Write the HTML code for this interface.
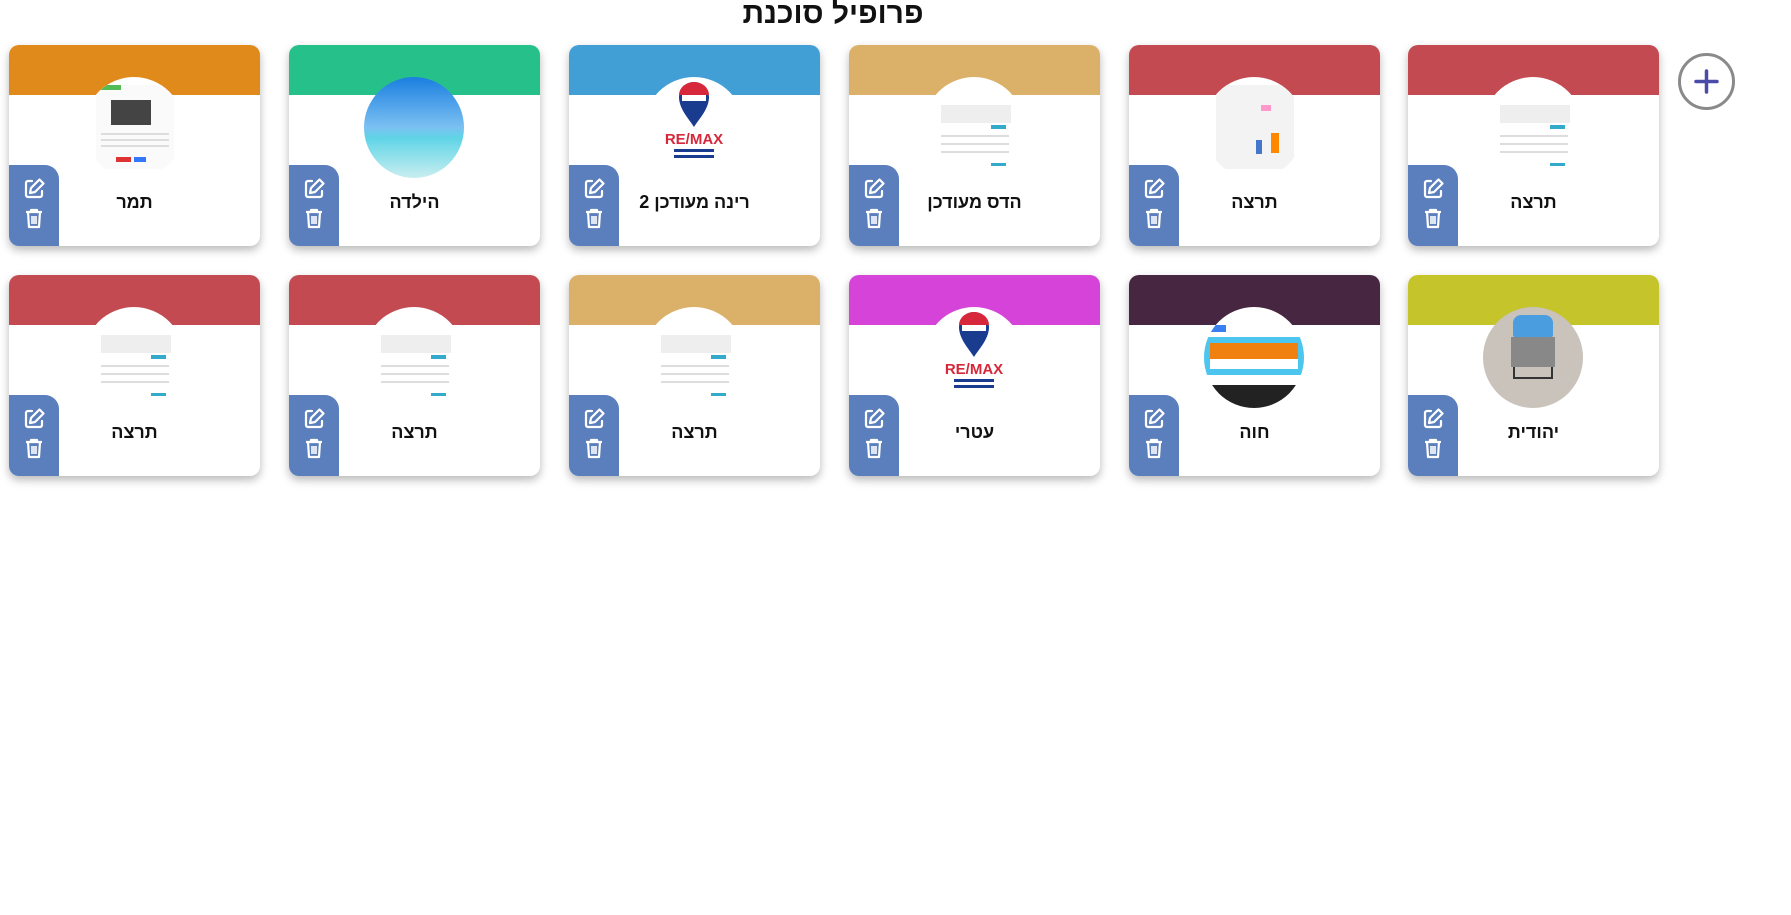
<!DOCTYPE html>
<html><head><meta charset="utf-8"><style>
*{box-sizing:border-box;margin:0;padding:0}
body{width:1791px;height:915px;background:#fff;font-family:"Liberation Sans","Noto Sans CJK SC",sans-serif;position:relative;overflow:hidden}
h1{position:absolute;left:0;width:1666px;text-align:center;top:-3px;font-size:30px;font-weight:bold;color:#111;direction:rtl}
.card{position:absolute;width:251px;height:201px;background:#fff;border-radius:10px;box-shadow:0 4px 9px rgba(0,0,0,.28);overflow:hidden}
.hd{position:absolute;left:0;top:0;width:100%;height:50px}
.av{position:absolute;left:75px;top:32px;width:100px;height:101px;border-radius:50%;background:#fff;overflow:hidden}
.side{position:absolute;left:0;top:120px;width:50px;height:81px;background:#5b7fbd;border-top-right-radius:14px}
.side svg{position:absolute;left:14px}
.nm{position:absolute;left:50px;right:0;top:147px;text-align:center;font-weight:bold;font-size:18px;direction:rtl;color:#111;padding-right:50px}
.shot{position:absolute;left:12px;top:8px;width:78px;height:84px;background:#fff}
.shot i{position:absolute;display:block;background:#ddd;height:2px}
.plus{position:absolute;left:1678px;top:53px;width:57px;height:57px;border:3px solid #8a8a8a;border-radius:50%}
</style></head><body>
<h1>פרופיל סוכנת</h1>
<div class="plus"><svg width="51" height="51" viewBox="0 0 51 51"><path d="M25.5 15v21M15 25.5h21" stroke="#4b4ba8" stroke-width="3.5" stroke-linecap="round"/></svg></div>

<svg width="0" height="0" style="position:absolute">
<defs>
<g id="ed"><path d="M9 4H5a2 2 0 0 0-2 2v12a2 2 0 0 0 2 2h12a2 2 0 0 0 2-2v-4" fill="none" stroke="#fff" stroke-width="2.2" stroke-linecap="round"/><path d="M16.5 2.5l4 4L12 15l-5 1 1-5z" fill="none" stroke="#fff" stroke-width="2.2" stroke-linejoin="round"/></g>
<g id="tr"><path d="M3 5h16M8 5V3h6v2M5 5l1 15h10l1-15" fill="none" stroke="#fff" stroke-width="2.2" stroke-linejoin="round"/><path d="M9 9v8M11 9v8M13 9v8" stroke="#fff" stroke-width="1.6"/></g>
</defs></svg>

<div class="card" style="left:9px;top:45px"><div class="hd" style="background:#e08a1c"></div><div class="av"><div class="shot" style="background:#fafafa"><i style="left:15px;top:15px;width:40px;height:25px;background:#444"></i><i style="left:5px;top:48px;width:68px"></i><i style="left:5px;top:54px;width:68px"></i><i style="left:5px;top:60px;width:68px"></i><i style="left:20px;top:72px;width:15px;height:5px;background:#d33"></i><i style="left:38px;top:72px;width:12px;height:5px;background:#37f"></i><i style="left:5px;top:0;width:20px;height:5px;background:#5b5"></i></div></div><div class="side"><svg width="22" height="22" viewBox="0 0 22 22" style="top:12px"><use href="#ed"/></svg><svg width="22" height="22" viewBox="0 0 22 22" style="top:42px"><use href="#tr"/></svg></div><div class="nm">תמר</div></div>

<div class="card" style="left:289px;top:45px"><div class="hd" style="background:#26c08a"></div><div class="av" style="background:linear-gradient(#1a7fe0 0%,#7cc0f2 50%,#5fd4e6 60%,#c9eef0 100%)"></div><div class="side"><svg width="22" height="22" viewBox="0 0 22 22" style="top:12px"><use href="#ed"/></svg><svg width="22" height="22" viewBox="0 0 22 22" style="top:42px"><use href="#tr"/></svg></div><div class="nm">הילדה</div></div>

<div class="card" style="left:569px;top:45px"><div class="hd" style="background:#429fd6"></div><div class="av"><svg width="100" height="101" viewBox="0 0 100 101"><path d="M35 20a15 15 0 0 1 30 0c0 12-10 22-15 30c-5-8-15-18-15-30z" fill="#1a3c8f"/><path d="M35 18a15 13 0 0 1 30 0z" fill="#d6283a"/><rect x="38" y="18" width="24" height="6" fill="#fff"/><text x="50" y="67" text-anchor="middle" font-family="Liberation Sans" font-weight="bold" font-size="15" fill="#d6283a">RE/MAX</text><rect x="30" y="72" width="40" height="3" fill="#1a3c8f"/><rect x="30" y="78" width="40" height="3" fill="#1a3c8f"/></svg></div><div class="side"><svg width="22" height="22" viewBox="0 0 22 22" style="top:12px"><use href="#ed"/></svg><svg width="22" height="22" viewBox="0 0 22 22" style="top:42px"><use href="#tr"/></svg></div><div class="nm">רינה מעודכן 2</div></div>

<div class="card" style="left:849px;top:45px"><div class="hd" style="background:#dbb068"></div><div class="av"><div class="shot"><i style="left:5px;top:20px;width:70px;height:18px;background:#eee"></i><i style="left:55px;top:40px;width:15px;height:4px;background:#3ac"></i><i style="left:5px;top:50px;width:68px"></i><i style="left:5px;top:58px;width:68px"></i><i style="left:5px;top:66px;width:68px"></i><i style="left:55px;top:78px;width:15px;height:3px;background:#3ac"></i></div></div><div class="side"><svg width="22" height="22" viewBox="0 0 22 22" style="top:12px"><use href="#ed"/></svg><svg width="22" height="22" viewBox="0 0 22 22" style="top:42px"><use href="#tr"/></svg></div><div class="nm">הדס מעודכן</div></div>

<div class="card" style="left:1129px;top:45px"><div class="hd" style="background:#c44a52"></div><div class="av"><div class="shot" style="background:#f3f3f3"><i style="left:45px;top:20px;width:10px;height:6px;background:#f9c"></i><i style="left:55px;top:48px;width:8px;height:20px;background:#f80"></i><i style="left:40px;top:55px;width:6px;height:14px;background:#47c"></i></div></div><div class="side"><svg width="22" height="22" viewBox="0 0 22 22" style="top:12px"><use href="#ed"/></svg><svg width="22" height="22" viewBox="0 0 22 22" style="top:42px"><use href="#tr"/></svg></div><div class="nm">תרצה</div></div>

<div class="card" style="left:1408px;top:45px"><div class="hd" style="background:#c44a52"></div><div class="av"><div class="shot"><i style="left:5px;top:20px;width:70px;height:18px;background:#eee"></i><i style="left:55px;top:40px;width:15px;height:4px;background:#3ac"></i><i style="left:5px;top:50px;width:68px"></i><i style="left:5px;top:58px;width:68px"></i><i style="left:5px;top:66px;width:68px"></i><i style="left:55px;top:78px;width:15px;height:3px;background:#3ac"></i></div></div><div class="side"><svg width="22" height="22" viewBox="0 0 22 22" style="top:12px"><use href="#ed"/></svg><svg width="22" height="22" viewBox="0 0 22 22" style="top:42px"><use href="#tr"/></svg></div><div class="nm">תרצה</div></div>

<div class="card" style="left:9px;top:275px"><div class="hd" style="background:#c44a52"></div><div class="av"><div class="shot"><i style="left:5px;top:20px;width:70px;height:18px;background:#eee"></i><i style="left:55px;top:40px;width:15px;height:4px;background:#3ac"></i><i style="left:5px;top:50px;width:68px"></i><i style="left:5px;top:58px;width:68px"></i><i style="left:5px;top:66px;width:68px"></i><i style="left:55px;top:78px;width:15px;height:3px;background:#3ac"></i></div></div><div class="side"><svg width="22" height="22" viewBox="0 0 22 22" style="top:12px"><use href="#ed"/></svg><svg width="22" height="22" viewBox="0 0 22 22" style="top:42px"><use href="#tr"/></svg></div><div class="nm">תרצה</div></div>

<div class="card" style="left:289px;top:275px"><div class="hd" style="background:#c44a52"></div><div class="av"><div class="shot"><i style="left:5px;top:20px;width:70px;height:18px;background:#eee"></i><i style="left:55px;top:40px;width:15px;height:4px;background:#3ac"></i><i style="left:5px;top:50px;width:68px"></i><i style="left:5px;top:58px;width:68px"></i><i style="left:5px;top:66px;width:68px"></i><i style="left:55px;top:78px;width:15px;height:3px;background:#3ac"></i></div></div><div class="side"><svg width="22" height="22" viewBox="0 0 22 22" style="top:12px"><use href="#ed"/></svg><svg width="22" height="22" viewBox="0 0 22 22" style="top:42px"><use href="#tr"/></svg></div><div class="nm">תרצה</div></div>

<div class="card" style="left:569px;top:275px"><div class="hd" style="background:#dbb068"></div><div class="av"><div class="shot"><i style="left:5px;top:20px;width:70px;height:18px;background:#eee"></i><i style="left:55px;top:40px;width:15px;height:4px;background:#3ac"></i><i style="left:5px;top:50px;width:68px"></i><i style="left:5px;top:58px;width:68px"></i><i style="left:5px;top:66px;width:68px"></i><i style="left:55px;top:78px;width:15px;height:3px;background:#3ac"></i></div></div><div class="side"><svg width="22" height="22" viewBox="0 0 22 22" style="top:12px"><use href="#ed"/></svg><svg width="22" height="22" viewBox="0 0 22 22" style="top:42px"><use href="#tr"/></svg></div><div class="nm">תרצה</div></div>

<div class="card" style="left:849px;top:275px"><div class="hd" style="background:#d643d9"></div><div class="av"><svg width="100" height="101" viewBox="0 0 100 101"><path d="M35 20a15 15 0 0 1 30 0c0 12-10 22-15 30c-5-8-15-18-15-30z" fill="#1a3c8f"/><path d="M35 18a15 13 0 0 1 30 0z" fill="#d6283a"/><rect x="38" y="18" width="24" height="6" fill="#fff"/><text x="50" y="67" text-anchor="middle" font-family="Liberation Sans" font-weight="bold" font-size="15" fill="#d6283a">RE/MAX</text><rect x="30" y="72" width="40" height="3" fill="#1a3c8f"/><rect x="30" y="78" width="40" height="3" fill="#1a3c8f"/></svg></div><div class="side"><svg width="22" height="22" viewBox="0 0 22 22" style="top:12px"><use href="#ed"/></svg><svg width="22" height="22" viewBox="0 0 22 22" style="top:42px"><use href="#tr"/></svg></div><div class="nm">עטרי</div></div>

<div class="card" style="left:1129px;top:275px"><div class="hd" style="background:#462640"></div><div class="av"><div style="position:absolute;left:0;top:30px;width:100px;height:38px;background:#4cc6ee"></div><div style="position:absolute;left:6px;top:36px;width:88px;height:16px;background:#f08010"></div><div style="position:absolute;left:6px;top:52px;width:88px;height:10px;background:#fff"></div><div style="position:absolute;left:0;top:78px;width:100px;height:25px;background:#222"></div><div style="position:absolute;left:2px;top:18px;width:20px;height:7px;background:#3a7ff0"></div></div><div class="side"><svg width="22" height="22" viewBox="0 0 22 22" style="top:12px"><use href="#ed"/></svg><svg width="22" height="22" viewBox="0 0 22 22" style="top:42px"><use href="#tr"/></svg></div><div class="nm">חוה</div></div>

<div class="card" style="left:1408px;top:275px"><div class="hd" style="background:#c6c42b"></div><div class="av" style="background:#c9c3bb"><div style="position:absolute;left:30px;top:8px;width:40px;height:22px;background:#4a9ee0;border-radius:8px 8px 2px 2px"></div><div style="position:absolute;left:28px;top:30px;width:44px;height:30px;background:#888"></div><div style="position:absolute;left:30px;top:60px;width:40px;height:12px;border:2px solid #333;border-top:none"></div></div><div class="side"><svg width="22" height="22" viewBox="0 0 22 22" style="top:12px"><use href="#ed"/></svg><svg width="22" height="22" viewBox="0 0 22 22" style="top:42px"><use href="#tr"/></svg></div><div class="nm">יהודית</div></div>
</body></html>
